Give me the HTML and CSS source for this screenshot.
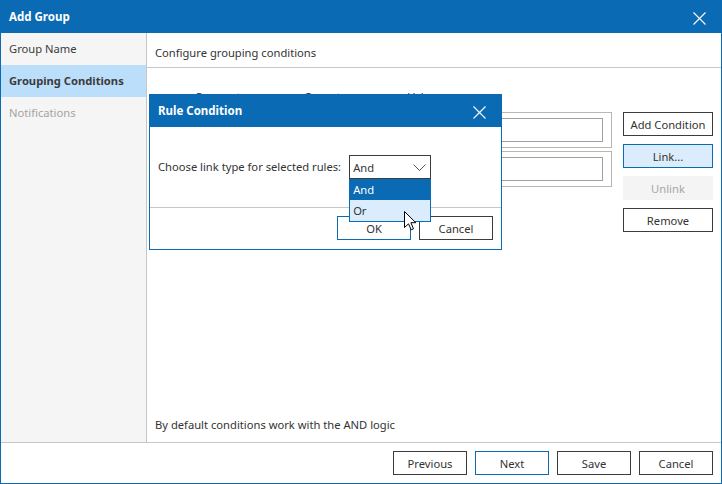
FILE: index.html
```html
<!DOCTYPE html>
<html>
<head>
<meta charset="utf-8">
<link rel="stylesheet" href="styles.css">
</head>
<body>
<div class="window">
  <div class="titlebar">
    <span class="title">Add Group</span>
    <svg class="close" width="13" height="13" viewBox="0 0 13 13"><path d="M0.5 0.5 L12.5 12.5 M12.5 0.5 L0.5 12.5" stroke="#fff" stroke-width="1.1" fill="none"/></svg>
  </div>
  <div class="content">
    <div class="sidebar">
      <div class="nav-item">Group Name</div>
      <div class="nav-item active">Grouping Conditions</div>
      <div class="nav-item disabled">Notifications</div>
    </div>
    <div class="main">
      <div class="main-header">Configure grouping conditions</div>
      <div class="main-body">
        <div class="col-heads"><span class="h-param">Parameter</span><span class="h-op">Operator</span><span class="h-val">Value</span></div>
        <div class="grid-area">
          <div class="rules">
            <div class="rule"><div class="rule-inner"></div></div>
            <div class="rule"><div class="rule-inner"></div></div>
          </div>
          <div class="side-buttons">
            <div class="btn">Add Condition</div>
            <div class="btn primary">Link...</div>
            <div class="btn disabled">Unlink</div>
            <div class="btn">Remove</div>
          </div>
        </div>
        <div class="note">By default conditions work with the AND logic</div>
      </div>
    </div>
  </div>
  <div class="footer">
    <div class="btn fbtn">Previous</div>
    <div class="btn fbtn focus">Next</div>
    <div class="btn fbtn">Save</div>
    <div class="btn fbtn">Cancel</div>
  </div>

  <div class="dialog">
    <div class="dtitlebar">
      <span class="title">Rule Condition</span>
      <svg class="close" width="13" height="13" viewBox="0 0 13 13"><path d="M0.5 0.5 L12.5 12.5 M12.5 0.5 L0.5 12.5" stroke="#fff" stroke-width="1.1" fill="none"/></svg>
    </div>
    <div class="dbody">
      <span class="dlabel">Choose link type for selected rules:</span>
      <div class="combo-wrap">
        <div class="combo"><span>And</span><svg width="13" height="7" viewBox="0 0 13 7"><path d="M0.5 0.5 L6.5 6.5 L12.5 0.5" stroke="#555" stroke-width="1" fill="none"/></svg></div>
        <div class="droplist">
          <div class="ditem sel">And</div>
          <div class="ditem hover">Or</div>
        </div>
      </div>
    </div>
    <div class="dfooter">
      <div class="btn fbtn focus">OK</div>
      <div class="btn fbtn">Cancel</div>
    </div>
  </div>

  <svg class="cursor" width="13" height="20" viewBox="0 0 13 20"><path d="M0.5 0.5 L0.5 16.5 L4.5 12.8 L7.2 18.8 L9.5 17.8 L6.9 11.7 L11.8 11.7 Z" fill="#fff" stroke="#000" stroke-width="1" stroke-linejoin="miter"/></svg>
</div>
</body>
</html>
```

FILE: styles.css
```css
* { box-sizing: border-box; }
html, body { margin: 0; padding: 0; background: #fff; }
body {
  font-family: "Noto Sans", "Open Sans", sans-serif;
  font-size: 11.2px;
  color: #333;
}
.window {
  position: relative;
  width: 722px;
  height: 484px;
  border: 1px solid #0a6ab3;
  border-top: none;
  display: flex;
  flex-direction: column;
  overflow: hidden;
}
.titlebar {
  height: 33px;
  margin: 0 -1px;
  background: #0a6ab3;
  color: #fff;
  display: flex;
  align-items: center;
  justify-content: space-between;
  padding: 0 16px 0 9px;
  flex: none;
}
.title { font-weight: bold; font-size: 11.5px; }
.titlebar .close { margin-top: 3px; }
.content {
  height: 410px;
  display: flex;
  border-bottom: 1px solid #c6c6c6;
  flex: none;
}
.sidebar {
  width: 146px;
  background: #f5f5f5;
  border-right: 1px solid #c6c6c6;
  flex: none;
}
.nav-item {
  height: 32px;
  line-height: 32px;
  padding-left: 8px;
  color: #3b3b3b;
}
.nav-item.active { background: #bbdefb; font-weight: bold; }
.nav-item.disabled { color: #a3a3a3; }
.main {
  flex: 1;
  display: flex;
  flex-direction: column;
}
.main-header {
  height: 35px;
  line-height: 34px;
  padding: 3px 0 0 8px;
  border-bottom: 1px solid #c6c6c6;
  flex: none;
}
.main-body {
  flex: 1;
  display: flex;
  flex-direction: column;
  padding: 21px 8px 9px 8px;
}
.col-heads {
  height: 16px;
  line-height: 16px;
  display: flex;
  padding-left: 41px;
  margin-bottom: 7px;
}
.h-param { width: 108px; }
.h-op { width: 104px; }
.grid-area {
  flex: 1;
  display: flex;
  gap: 11px;
}
.rules {
  width: 457px;
  display: flex;
  flex-direction: column;
  gap: 3px;
}
.rule {
  height: 36px;
  border: 1px solid #b8b8b0;
  padding: 5px 8px 5px 40px;
}
.rule-inner {
  height: 24px;
  border: 1px solid #a0a0a0;
}
.side-buttons {
  width: 90px;
  display: flex;
  flex-direction: column;
  gap: 8px;
}
.btn {
  height: 24px;
  border: 1px solid #3c3c3c;
  background: #fff;
  display: flex;
  align-items: center;
  justify-content: center;
  color: #333;
}
.btn.primary { background: #dbedfc; border-color: #0a6ab3; }
.btn.focus { border-color: #0a6ab3; }
.btn.disabled { background: #f4f4f4; border-color: #f4f4f4; color: #a6a6a6; }
.note {
  height: 16px;
  line-height: 16px;
}
.footer {
  height: 40px;
  display: flex;
  justify-content: flex-end;
  align-items: center;
  gap: 8px;
  padding-right: 8px;
  flex: none;
}
.fbtn { width: 74px; }

.dialog {
  position: absolute;
  left: 148px;
  top: 94px;
  width: 353px;
  height: 156px;
  background: #fff;
  border: 1px solid #0a6ab3;
  border-top: none;
  display: flex;
  flex-direction: column;
}
.dtitlebar {
  height: 33px;
  margin: 0 -1px;
  background: #0a6ab3;
  color: #fff;
  display: flex;
  align-items: center;
  justify-content: space-between;
  padding: 0 16px 0 9px;
  flex: none;
}
.dtitlebar .close { margin-top: 3px; }
.dbody {
  height: 81px;
  border-bottom: 1px solid #c6c6c6;
  display: flex;
  align-items: flex-start;
  padding: 28px 0 0 8px;
  gap: 8px;
  flex: none;
}
.dlabel { line-height: 24px; }
.combo-wrap { position: relative; width: 82px; }
.combo {
  height: 24px;
  border: 1px solid #3c3c3c;
  display: flex;
  align-items: center;
  justify-content: space-between;
  padding: 0 4px 0 3px;
}
.combo svg { margin-top: 1px; }
.droplist {
  position: absolute;
  left: 0;
  top: 24px;
  width: 82px;
  border: 1px solid #0a6ab3;
  border-top: none;
  background: #fff;
}
.ditem { height: 21px; line-height: 21px; padding-left: 3px; }
.ditem.sel { background: #0a6ab3; color: #fff; margin: 0 -1px; padding-left: 4px; }
.ditem.hover { background: #dbedfc; }
.dfooter {
  flex: 1;
  display: flex;
  justify-content: flex-end;
  align-items: flex-start;
  gap: 8px;
  padding: 8px 8px 0 0;
}
.cursor {
  position: absolute;
  left: 403px;
  top: 211px;
}
```
